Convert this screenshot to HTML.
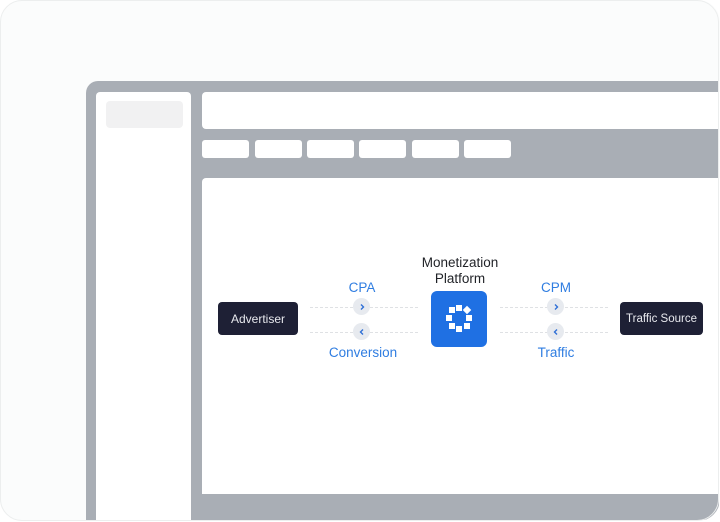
<!DOCTYPE html>
<html><head><style>
*{margin:0;padding:0;box-sizing:border-box}
body{width:720px;height:522px;background:#fff;position:relative;overflow:hidden;font-family:"Liberation Sans","DejaVu Sans",sans-serif}
.a{position:absolute}
.w{background:#fff}
.card{left:0;top:0;width:720px;height:521px;border-radius:22px;background:#fbfcfc;overflow:hidden}
.bd{left:0;top:0;width:719px;height:521px;border:1.5px solid #eceeee;border-radius:22px;pointer-events:none}
.frame{left:86px;top:81px;width:633px;height:439px;background:#a9aeb5;border-radius:12px 0 16px 0}
.btn{background:#1e2035;color:#e8e9ee;font-size:12px;border-radius:4px;display:flex;align-items:center;justify-content:center}
.lbl{color:#2f7de1;font-size:13.5px;text-align:center;width:100px}
.dot{border-top:1px dashed #dfe1e4;height:0}
.c{width:17px;height:17px;border-radius:50%;background:#e7eaef;display:flex;align-items:center;justify-content:center}
.sq{position:absolute;width:6px;height:6px;background:#fff}
</style></head><body>
<div class="a card">
<div class="a frame"></div>
<div class="a w" style="left:96px;top:92px;width:95px;height:430px;border-radius:4px 4px 0 0"></div>
<div class="a" style="left:106px;top:101px;width:77px;height:27px;background:#f1f1f2;border-radius:4px"></div>
<div class="a w" style="left:202px;top:92px;width:520px;height:37px;border-radius:4px 0 0 4px"></div>
<div class="a w" style="left:202px;top:140px;width:47px;height:18px;border-radius:3px"></div>
<div class="a w" style="left:255px;top:140px;width:47px;height:18px;border-radius:3px"></div>
<div class="a w" style="left:307px;top:140px;width:47px;height:18px;border-radius:3px"></div>
<div class="a w" style="left:359px;top:140px;width:47px;height:18px;border-radius:3px"></div>
<div class="a w" style="left:412px;top:140px;width:47px;height:18px;border-radius:3px"></div>
<div class="a w" style="left:464px;top:140px;width:47px;height:18px;border-radius:3px"></div>
<div class="a w" style="left:202px;top:178px;width:520px;height:316px;border-radius:4px 0 0 0"></div>

<div class="a btn" style="left:218px;top:302px;width:80px;height:33px">Advertiser</div>
<div class="a btn" style="left:620px;top:302px;width:83px;height:33px;font-size:11.5px">Traffic Source</div>

<div class="a dot" style="left:310px;top:307px;width:108px"></div>
<div class="a dot" style="left:310px;top:332px;width:108px"></div>
<div class="a dot" style="left:500px;top:307px;width:108px"></div>
<div class="a dot" style="left:500px;top:332px;width:108px"></div>

<div class="a c" style="left:353px;top:298px"><svg width="8" height="8" viewBox="0 0 8 8"><path d="M3 1.5L5.5 4L3 6.5" fill="none" stroke="#2f6fd6" stroke-width="1.4"/></svg></div>
<div class="a c" style="left:353px;top:323px"><svg width="8" height="8" viewBox="0 0 8 8"><path d="M5 1.5L2.5 4L5 6.5" fill="none" stroke="#2f6fd6" stroke-width="1.4"/></svg></div>
<div class="a c" style="left:547px;top:298px"><svg width="8" height="8" viewBox="0 0 8 8"><path d="M3 1.5L5.5 4L3 6.5" fill="none" stroke="#2f6fd6" stroke-width="1.4"/></svg></div>
<div class="a c" style="left:547px;top:323px"><svg width="8" height="8" viewBox="0 0 8 8"><path d="M5 1.5L2.5 4L5 6.5" fill="none" stroke="#2f6fd6" stroke-width="1.4"/></svg></div>

<div class="a lbl" style="left:312px;top:280px">CPA</div>
<div class="a lbl" style="left:313px;top:345px">Conversion</div>
<div class="a lbl" style="left:506px;top:280px">CPM</div>
<div class="a lbl" style="left:506px;top:345px">Traffic</div>

<div class="a" style="left:400px;top:255px;width:120px;text-align:center;font-size:13.5px;line-height:16px;color:#1f2126">Monetization<br>Platform</div>

<div class="a" style="left:431px;top:291px;width:56px;height:56px;background:#1f70e3;border-radius:6px">
<div class="sq" style="left:18px;top:16px"></div>
<div class="sq" style="left:25px;top:14px"></div>
<div class="sq" style="left:33px;top:16px;transform:rotate(45deg)"></div>
<div class="sq" style="left:15px;top:24px"></div>
<div class="sq" style="left:35px;top:24px"></div>
<div class="sq" style="left:18px;top:32px"></div>
<div class="sq" style="left:25px;top:35px"></div>
<div class="sq" style="left:33px;top:32px"></div>
</div>
</div>
<div class="a bd"></div>
</body></html>
